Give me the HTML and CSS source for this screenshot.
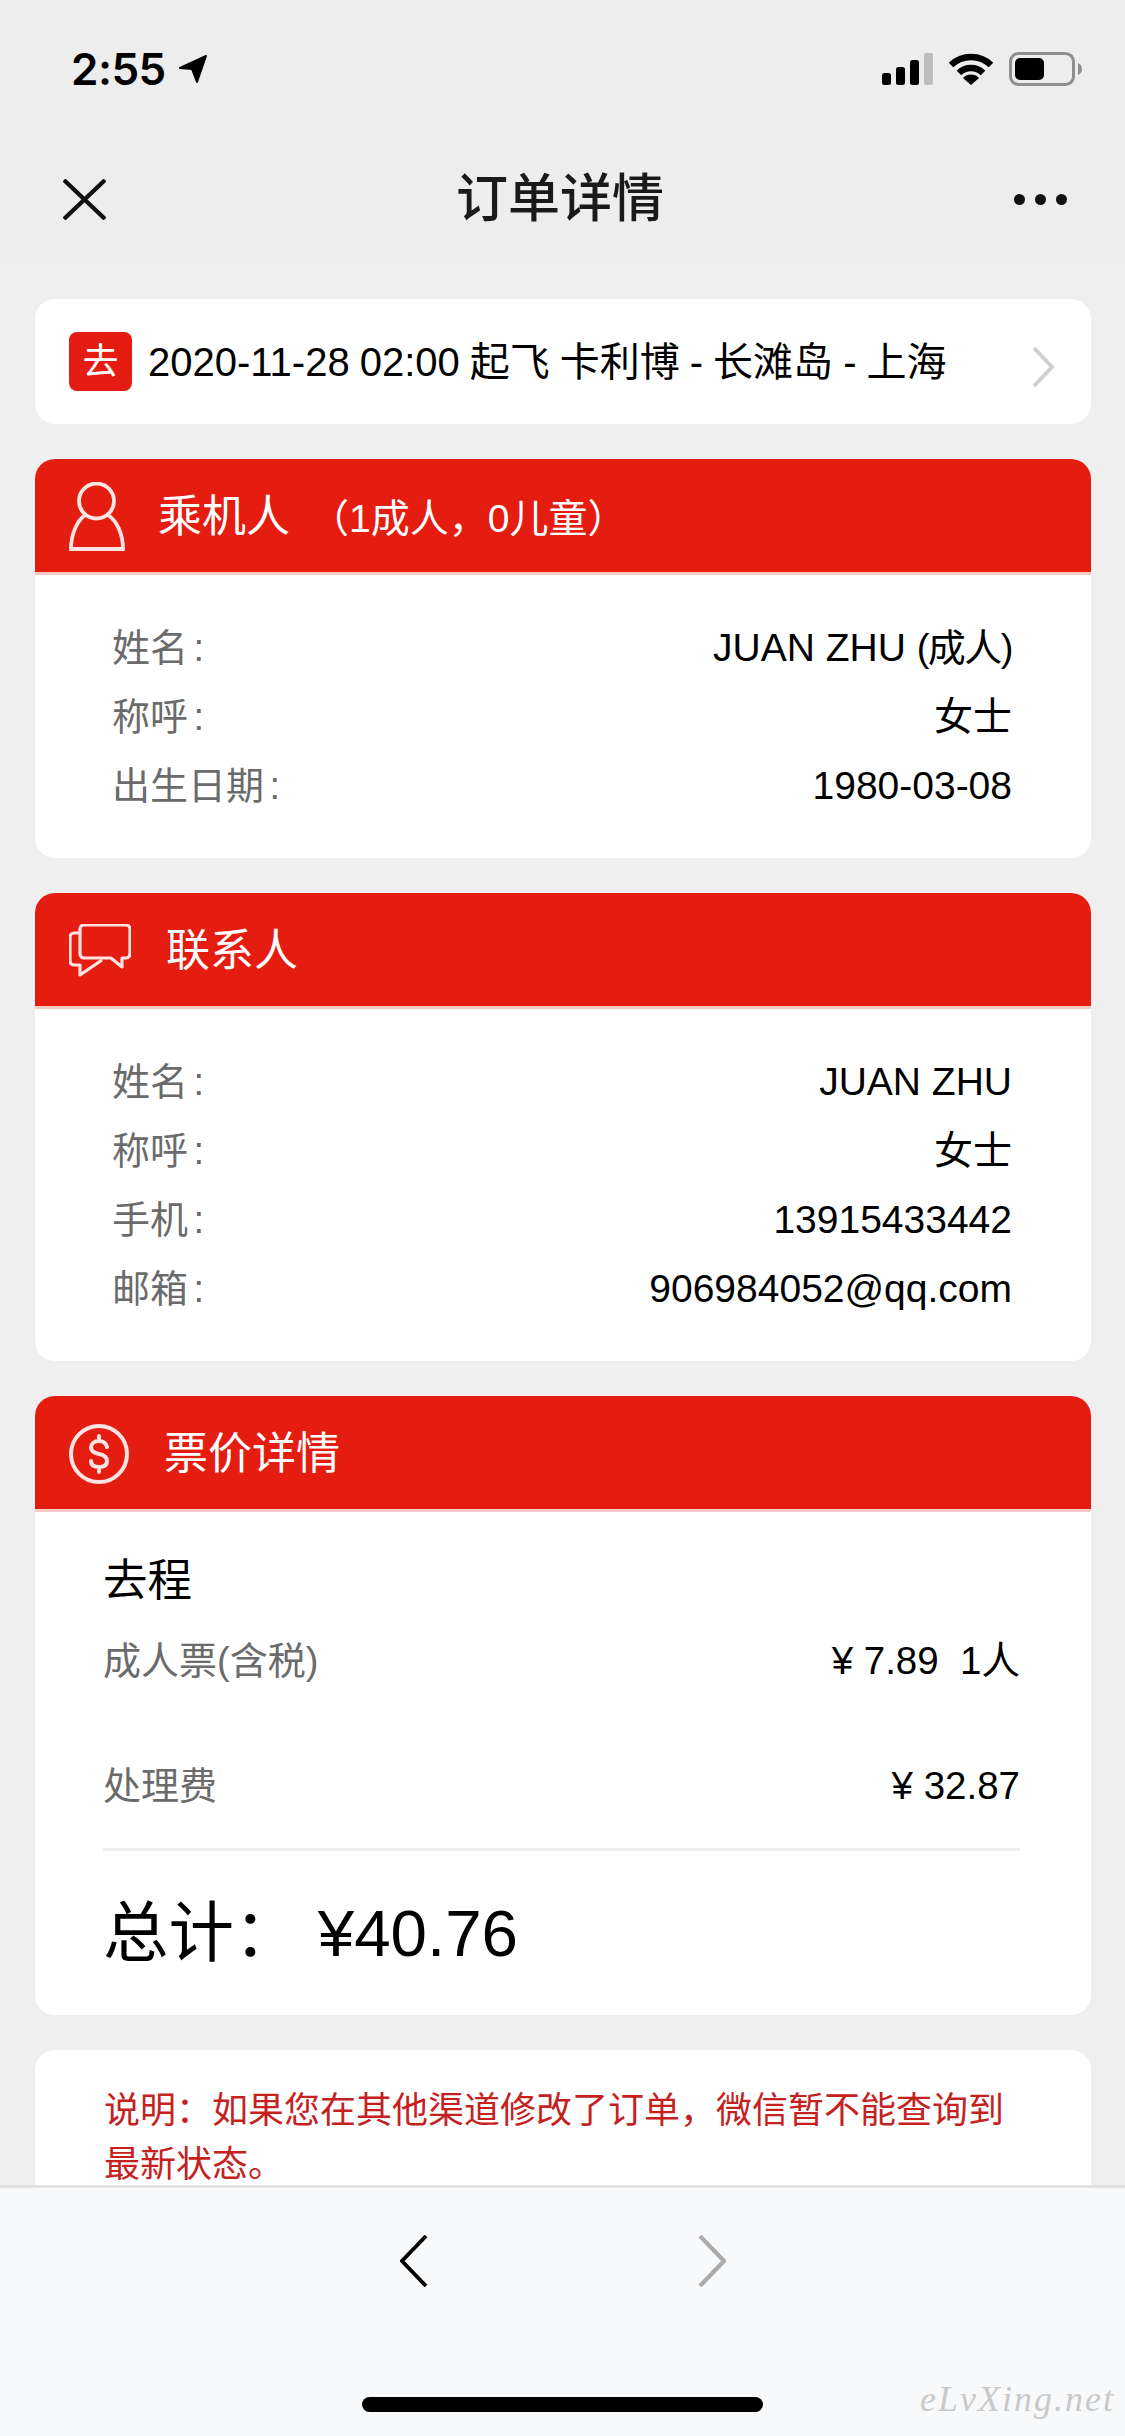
FILE: index.html
```html
<!DOCTYPE html>
<html lang="zh-CN">
<head>
<meta charset="utf-8">
<title>订单详情</title>
<link rel="stylesheet" href="styles.css">
</head>
<body>
<div class="screen">
  <header class="top">
    <div class="status">
      <div class="status-left">
        <span class="time">2:55</span>
        <svg class="loc" width="30" height="30" viewBox="0 0 30 30"><path d="M28 2 2 14l12 1 5 13z" fill="#000" stroke="#000" stroke-width="2" stroke-linejoin="round"/></svg>
      </div>
      <div class="status-right">
        <svg width="51" height="33" viewBox="0 0 51 33"><rect x="0" y="20" width="9" height="12" rx="2.5" fill="#000"/><rect x="14" y="14" width="9" height="18" rx="2.5" fill="#000"/><rect x="28" y="7" width="9" height="25" rx="2.5" fill="#000"/><rect x="42" y="0" width="9" height="32" rx="2" fill="#bdbdbd"/></svg>
        <svg width="46" height="34" viewBox="0 0 46 34"><path d="M3 13A29 29 0 0 1 43 13" fill="none" stroke="#000" stroke-width="6.5"/><path d="M11 21A17 17 0 0 1 35 21" fill="none" stroke="#000" stroke-width="6.5"/><path d="M23 33 15 26A11 11 0 0 1 31 26z" fill="#000"/></svg>
        <svg width="73" height="34" viewBox="0 0 73 34"><rect x="1.5" y="1.5" width="63" height="31" rx="8" fill="none" stroke="#8e8e8e" stroke-width="3"/><rect x="6" y="6" width="29" height="22" rx="5" fill="#000"/><path d="M69 11q4 2 4 6t-4 6z" fill="#8e8e8e"/></svg>
      </div>
    </div>
    <nav class="nav">
      <svg class="nav-close" width="43" height="41" viewBox="0 0 43 41"><path d="M1 1 42 40M42 1 1 40" fill="none" stroke="#111" stroke-width="4.200"/></svg>
      <h1 class="nav-title">订单详情</h1>
      <svg class="nav-more" width="53" height="11" viewBox="0 0 53 11"><circle cx="5.500" cy="5.500" r="5.500" fill="#111"/><circle cx="26.500" cy="5.500" r="5.500" fill="#111"/><circle cx="47.500" cy="5.500" r="5.500" fill="#111"/></svg>
    </nav>
  </header>

  <main class="content">
    <section class="card flight">
      <span class="badge">去</span>
      <span class="flight-text">2020-11-28 02:00 起飞 卡利博 - 长滩岛 - 上海</span>
      <svg class="flight-arrow" width="22" height="40" viewBox="0 0 22 40"><path d="M2 1 20 20 2 39" fill="none" stroke="#cfcfcf" stroke-width="3.800"/></svg>
    </section>

    <section class="card">
      <div class="card-head">
        <svg class="head-icon" width="56" height="69" viewBox="0 0 56 69"><circle cx="27.500" cy="19" r="17.500" fill="none" stroke="#fde4e2" stroke-width="3.800"/><path d="M16 33C8 39 2 52 2 67H54C54 52 48 39 39 33" fill="none" stroke="#fde4e2" stroke-width="3.800"/></svg>
        <h2 class="head-title title-a">乘机人<span class="head-sub">（1成人，0儿童）</span></h2>
      </div>
      <div class="rows">
        <div class="row"><span class="label">姓名 :</span><span class="value">JUAN ZHU <span class="value-tag">(成人)</span></span></div>
        <div class="row"><span class="label">称呼 :</span><span class="value">女士</span></div>
        <div class="row"><span class="label">出生日期 :</span><span class="value">1980-03-08</span></div>
      </div>
    </section>

    <section class="card">
      <div class="card-head">
        <svg class="head-icon" width="62" height="53" viewBox="0 0 62 53"><path d="M11 8V5a4 4 0 0 1 4-4H57a4 4 0 0 1 4 4V30a4 4 0 0 1-4 4H53V43L42 34H15a4 4 0 0 1-4-4V8z" fill="none" stroke="#fde4e2" stroke-width="3.200" stroke-linejoin="round"/><path d="M11 9H5a4 4 0 0 0-4 4V37a4 4 0 0 0 4 4H11V51L33 36" fill="none" stroke="#fde4e2" stroke-width="3.200" stroke-linejoin="round"/></svg>
        <h2 class="head-title title-b">联系人</h2>
      </div>
      <div class="rows">
        <div class="row"><span class="label">姓名 :</span><span class="value">JUAN ZHU</span></div>
        <div class="row"><span class="label">称呼 :</span><span class="value">女士</span></div>
        <div class="row"><span class="label">手机 :</span><span class="value">13915433442</span></div>
        <div class="row"><span class="label">邮箱 :</span><span class="value">906984052@qq.com</span></div>
      </div>
    </section>

    <section class="card">
      <div class="card-head">
        <svg class="head-icon" width="60" height="62" viewBox="0 0 60 62"><circle cx="30" cy="31" r="28" fill="none" stroke="#fde4e2" stroke-width="4"/><path d="M38 24C37 20 34 18 30 18C25 18 22 21 22 24.500C22 28 25 30 30 31C35 32 38 34 38 38C38 42 35 44 30 44C25 44 22 42 22 38M30 13V18M30 44V49" fill="none" stroke="#fde4e2" stroke-width="4" stroke-linecap="round"/></svg>
        <h2 class="head-title title-c">票价详情</h2>
      </div>
      <div class="price">
        <div class="price-title">去程</div>
        <div class="price-row price-row-first"><span class="label">成人票(含税)</span><span class="value">¥ 7.89&nbsp; 1人</span></div>
        <div class="price-row price-row-second"><span class="label">处理费</span><span class="value">¥ 32.87</span></div>
        <div class="price-rule"></div>
        <div class="price-total">总计： ¥40.76</div>
      </div>
    </section>

    <section class="card note">说明：如果您在其他渠道修改了订单，微信暂不能查询到最新状态。</section>
  </main>

  <footer class="toolbar">
    <div class="toolbar-nav">
      <svg width="28" height="52" viewBox="0 0 28 52"><path d="M26 1 2 26 26 51" fill="none" stroke="#000" stroke-width="3.800"/></svg>
      <svg width="28" height="52" viewBox="0 0 28 52"><path d="M2 1 26 26 2 51" fill="none" stroke="#ababab" stroke-width="4.200"/></svg>
    </div>
    <div class="home-bar"></div>
    <span class="watermark">eLvXing.net</span>
  </footer>
</div>
</body>
</html>
```
FILE: styles.css
```css
* { box-sizing: border-box; }
html, body { margin: 0; padding: 0; }
body {
  width: 1125px;
  height: 2436px;
  overflow: hidden;
  font-family: "Liberation Sans", "Noto Sans CJK SC", sans-serif;
  color: #000;
}
.screen {
  position: relative;
  width: 1125px;
  height: 2436px;
  display: flex;
  flex-direction: column;
  background: #efefef;
}
.top { flex: none; height: 264px; background: #ededed; }
.status {
  height: 138px;
  display: flex;
  align-items: center;
  justify-content: space-between;
  padding: 0 43px 0 71px;
}
.status-left { display: flex; align-items: center; }
.time { font-family: Inter, "Liberation Sans", sans-serif; font-size: 44px; font-weight: 600; letter-spacing: -0.5px; line-height: 50px; }
.loc { margin-left: 12px; }
.status-right { display: flex; align-items: center; gap: 15px; }
.nav {
  height: 126px;
  padding: 0 58px 4px 63px;
  display: flex;
  align-items: center;
  justify-content: space-between;
}
.nav-title {
  margin: 0;
  font-size: 52px;
  font-weight: 500;
  line-height: 70px;
  color: #1a1a1a;
}
.content {
  flex: 1;
  min-height: 0;
  overflow: hidden;
  padding: 35px 34px 0 35px;
  display: flex;
  flex-direction: column;
  gap: 35px;
}
.card { flex: none; background: #fff; border-radius: 20px; overflow: hidden; }
.flight {
  height: 125px;
  padding: 0 37px 0 34px;
  display: flex;
  align-items: center;
}
.badge {
  flex: none;
  width: 63px;
  height: 59px;
  border-radius: 8px;
  background: #e51c12;
  color: #fff;
  font-size: 36px;
  line-height: 59px;
  text-align: center;
}
.flight-text { margin-left: 16px; font-size: 40px; word-spacing: -1.1px; line-height: 60px; color: #000; white-space: nowrap; }
.flight-arrow { margin-left: auto; margin-top: 10px; }
.card-head {
  height: 116px;
  padding: 2px 34px 0;
  background: #e51c10;
  border-bottom: 3px solid #f7c9c5;
  display: flex;
  align-items: center;
}
.head-title { margin: 0; color: #fff; font-size: 44px; font-weight: 400; line-height: 60px; white-space: nowrap; }
.head-icon { flex: none; }
.title-a { margin-left: 33px; padding-top: 2px; }
.title-b { margin-left: 35px; }
.title-c { margin-left: 35px; }
.head-sub { font-size: 39px; margin-left: 20px; }
.rows { padding: 38px 79px 38px 77px; }
.row {
  height: 69px;
  display: flex;
  align-items: center;
  justify-content: space-between;
}
.label { color: #6b6b6b; font-size: 38px; line-height: 50px; word-spacing: -5px; white-space: nowrap; }
.value { color: #000; font-size: 39px; line-height: 50px; white-space: nowrap; }
.value-tag { font-size: 38px; letter-spacing: -1.5px; }
.price { padding: 34px 71px 31px 68px; }
.price-title { font-size: 44.500px; line-height: 70px; }
.price-row { height: 60px; display: flex; align-items: center; justify-content: space-between; }
.price-row-first { margin-top: 15px; }
.price-row-second { margin-top: 65px; }
.price-row .value { font-size: 38.500px; }
.price-rule { height: 3px; margin-top: 32px; background: #efefef; }
.price-total { margin-top: 33px; font-size: 65.500px; line-height: 100px; white-space: pre; }
.note {
  padding: 34px 69px 60px;
  font-size: 36px;
  line-height: 54px;
  color: #c5221f;
}
.toolbar {
  position: relative;
  flex: none;
  height: 251px;
  background: #f8f9fb;
  border-top: 3px solid #e2e2e2;
  display: flex;
  flex-direction: column;
  align-items: center;
}
.toolbar-nav { margin-top: 47px; display: flex; gap: 270px; }
.home-bar { margin-top: auto; margin-bottom: 24px; width: 401px; height: 15px; border-radius: 8px; background: #000; }
.watermark {
  position: absolute;
  right: 10px;
  bottom: 15px;
  font-family: "Liberation Serif", serif;
  font-style: italic;
  font-size: 36px;
  letter-spacing: 2px;
  line-height: 44px;
  color: #c9c9c9;
}
```
